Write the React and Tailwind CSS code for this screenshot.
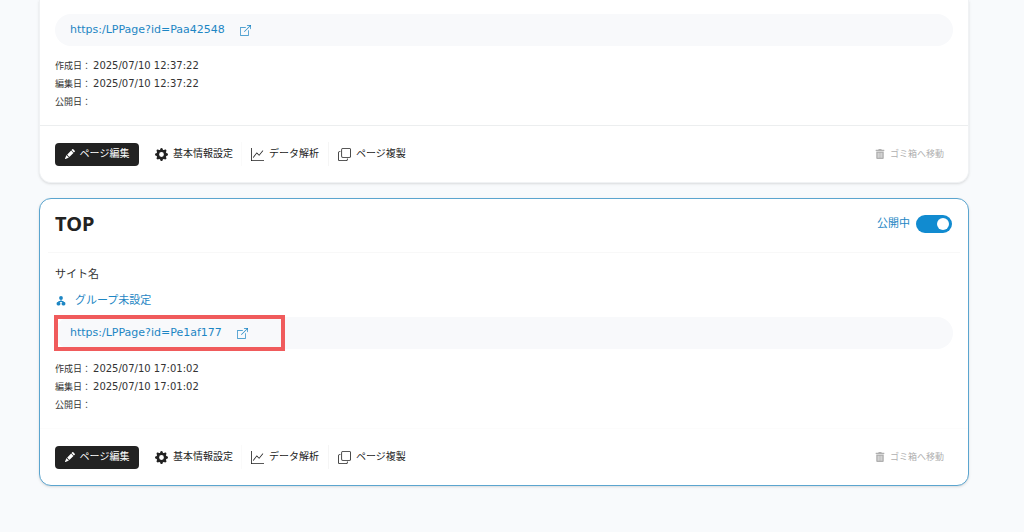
import { BsBoxArrowUpRight, BsCopy, BsGearFill, BsGraphUp, BsPencilFill } from "react-icons/bs";
import { FaTrashAlt } from "react-icons/fa";

function GroupIcon() {
  return (
    <svg viewBox="0 0 12 12" className="size-3" fill="currentColor" aria-hidden="true">
      <circle cx="6" cy="2.9" r="1.9" />
      <path d="M5.5 4h1v2h1.8l1.2 2-.8.5-1-1.6H4.3l-1 1.6-.8-.5 1.2-2h1.8z" />
      <rect x="1.6" y="7" width="3.8" height="3.4" rx="1.4" />
      <rect x="6.6" y="7" width="3.8" height="3.4" rx="1.4" />
    </svg>
  );
}

function PageUrl({ url, highlighted }) {
  return (
    <div className="relative flex h-8 items-center rounded-full bg-[#f8f9fb] px-[15px]">
      <a href="#page" className="flex items-center gap-[15px] text-[11px] leading-4 text-[#1d86c4]">
        {url}
        <BsBoxArrowUpRight className="size-[11px]" />
      </a>
      {highlighted && (
        <span className="pointer-events-none absolute -inset-y-0.5 -left-px w-[231px] border-4 border-[#f05b5c]" />
      )}
    </div>
  );
}

function Dates({ created, edited }) {
  const rows = [
    ["作成日：", created],
    ["編集日：", edited],
    ["公開日：", ""],
  ];
  return (
    <dl className="mt-[11px] text-[#333]">
      {rows.map(([label, value]) => (
        <div key={label} className="flex h-[18px] items-center gap-0.5 leading-[18px]">
          <dt className="text-[9px]">{label}</dt>
          <dd className="text-[10px]">{value}</dd>
        </div>
      ))}
    </dl>
  );
}

function Actions() {
  return (
    <div className="flex items-center px-[15px] pt-4 text-[10px] leading-4 text-[#222]">
      <button className="flex h-[23px] w-[84px] items-center justify-center gap-[5px] rounded bg-[#222] text-white">
        <BsPencilFill className="size-[10px]" />
        ページ編集
      </button>
      <button className="ml-2 flex h-6 items-center gap-[5px] border-r border-[#fafafa] px-2">
        <BsGearFill className="size-[13px]" />
        基本情報設定
      </button>
      <button className="flex h-6 items-center gap-[5px] border-r border-[#f5f5f5] px-[9px]">
        <BsGraphUp className="size-[13px]" />
        データ解析
      </button>
      <button className="flex h-6 items-center gap-[5px] px-[9px]">
        <BsCopy className="size-[13px]" />
        ページ複製
      </button>
      <button className="ml-auto mr-[9px] flex h-6 items-center gap-[5px] text-[9px] text-[#b0b0b0]">
        <FaTrashAlt className="size-2.5" />
        ゴミ箱へ移動
      </button>
    </div>
  );
}

export default function App() {
  return (
    <main className="min-h-screen bg-[#f8fafc] pr-[55px] pl-[39px] font-['DejaVu_Sans','Noto_Sans_CJK_JP',sans-serif]">
      <article className="rounded-b-xl border border-t-0 border-[#f0f2f4] bg-white pb-4 shadow-sm">
        <div className="px-[15px] pt-3.5 pb-3.5">
          <PageUrl url="https:/LPPage?id=Paa42548" />
          <Dates created="2025/07/10 12:37:22" edited="2025/07/10 12:37:22" />
        </div>
        <div className="border-t border-[#eceeef]">
          <Actions />
        </div>
      </article>

      <article className="mt-[15px] rounded-xl border border-[#5ba5cf] bg-white pb-4 shadow-sm">
        <header className="mx-2 flex h-[54px] items-center justify-between border-b border-[#f8f8f8] pr-2 pb-[3px] pl-[7px]">
          <h2 className="font-['Noto_Sans',sans-serif] text-xl font-bold text-[#222]">TOP</h2>
          <label className="flex items-center gap-1.5 text-[11px] text-[#1d86c4]">
            公開中
            <span className="relative flex">
              <input
                type="checkbox"
                role="switch"
                defaultChecked
                className="peer h-[18px] w-9 appearance-none rounded-full bg-gray-300 checked:bg-[#118bd0]"
              />
              <span className="pointer-events-none absolute top-[3px] left-[3px] size-3 rounded-full bg-white peer-checked:left-[21px]" />
            </span>
          </label>
        </header>
        <div className="px-[15px] pt-3.5 pb-3.5">
          <p className="text-[11px] leading-4 text-[#333]">サイト名</p>
          <a href="#group" className="mt-2.5 mb-2 flex items-center gap-2 text-[11px] leading-4 text-[#1d86c4]">
            <GroupIcon />
            グループ未設定
          </a>
          <PageUrl url="https:/LPPage?id=Pe1af177" highlighted />
          <Dates created="2025/07/10 17:01:02" edited="2025/07/10 17:01:02" />
        </div>
        <div className="border-t border-[#fcfcfc]">
          <Actions />
        </div>
      </article>
    </main>
  );
}
